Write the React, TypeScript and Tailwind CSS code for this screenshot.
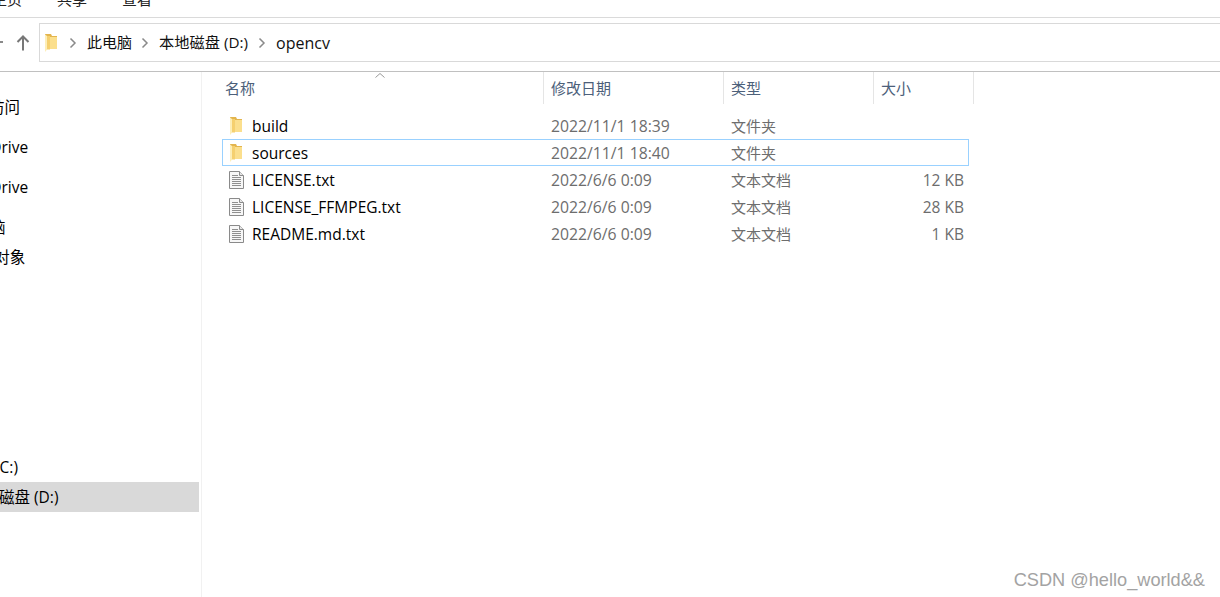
const uiFont = "font-['Open_Sans','Noto_Sans_CJK_SC',sans-serif]";

type FileRow = {
  name: string;
  date: string;
  kind: string;
  size?: string;
  folder?: boolean;
  selected?: boolean;
};

const files: FileRow[] = [
  { name: 'build', date: '2022/11/1 18:39', kind: '文件夹', folder: true },
  { name: 'sources', date: '2022/11/1 18:40', kind: '文件夹', folder: true, selected: true },
  { name: 'LICENSE.txt', date: '2022/6/6 0:09', kind: '文本文档', size: '12 KB' },
  { name: 'LICENSE_FFMPEG.txt', date: '2022/6/6 0:09', kind: '文本文档', size: '28 KB' },
  { name: 'README.md.txt', date: '2022/6/6 0:09', kind: '文本文档', size: '1 KB' },
];

function FolderIcon() {
  return (
    <svg width="14" height="18" viewBox="0 0 14 18" className="shrink-0">
      <path d="M1 0h6l1 2h5v13H3z" fill="#e3b54e" />
      <path d="M3 3h10v12H3z" fill="#fbdf8d" />
      <path d="M1 .5 3 2v13.500L1 18z" fill="#fdeeb8" />
      <path d="M3 2h3v13.500H3z" fill="#f5d06f" />
    </svg>
  );
}

function DocIcon() {
  return (
    <svg width="15" height="18" viewBox="0 0 15 18" className="shrink-0">
      <path d="M.5.500h10l4 4v13H.5z" fill="#f7f7f7" stroke="#8a8a8a" />
      <path d="M10.500.500v4h4" fill="#e6e6e6" stroke="#8a8a8a" />
      <path d="M3 4.500h6M3 6.500h9M3 8.500h9M3 10.500h9M3 12.500h9M3 14.500h9" stroke="#8f8f8f" />
    </svg>
  );
}

function Chevron() {
  return (
    <svg width="8" height="12" viewBox="0 0 8 12" className="shrink-0">
      <path d="M1.500 1.500 6 6l-4.500 4.500" fill="none" stroke="#8a8a8a" strokeWidth="1.500" />
    </svg>
  );
}

function NavItem({ label, offset, active, className }: { label: string; offset: string; active?: boolean; className: string }) {
  return (
    <div className={`flex items-center whitespace-nowrap text-[15.5px] text-black ${active ? 'bg-[#d9d9d9]' : ''} ${className}`}>
      <span className={`translate-y-px ${offset}`}>{label}</span>
    </div>
  );
}

export default function App() {
  return (
    <div className={`relative flex h-[597px] w-[1220px] flex-col overflow-hidden bg-white ${uiFont}`}>
      {/* Ribbon tabs, cut off by the top of the picture */}
      <div className="flex h-[17px] shrink-0 items-start gap-[35px] overflow-hidden text-[15px] leading-[20px] text-[#222]">
        <span className="-ml-[8px] -mt-[11px]">主页</span>
        <span className="-mt-[11px]">共享</span>
        <span className="-mt-[11px]">查看</span>
      </div>
      <div className="h-px shrink-0 bg-[#dadada]" />

      {/* Address bar */}
      <div className="mt-[5px] flex h-[39px] shrink-0 items-center">
        <div className="h-[2px] w-[3px] -translate-y-px bg-[#8a8a8a]" />
        <div className="ml-[9px] flex w-[22px] shrink-0 justify-center">
          <svg width="16" height="18" viewBox="0 0 16 18">
            <path d="M8 2.500v14M2.500 8 8 2.500 13.500 8" fill="none" stroke="#777" strokeWidth="2" />
          </svg>
        </div>
        <div className="ml-[5px] flex h-full flex-1 items-center border border-r-0 border-[#d9d9d9] pl-[4px] text-[15px] text-[#111]">
          <FolderIcon />
          <div className="ml-[11px] flex items-center">
            <Chevron />
            <span className="ml-[10px]">此电脑</span>
          </div>
          <div className="ml-[9px] flex items-center">
            <Chevron />
            <span className="ml-[10px] text-[15.250px]">本地磁盘 (D:)</span>
          </div>
          <div className="ml-[10px] flex items-center">
            <Chevron />
            <span className="ml-[10px] text-[16px]">opencv</span>
          </div>
        </div>
      </div>

      <div className="mt-[9px] h-px shrink-0 bg-[#c0c0c0]" />

      <div className="flex min-h-0 flex-1">
        {/* Navigation pane */}
        <aside className="w-[202px] shrink-0 overflow-hidden border-r border-[#f1f1f1] pr-[2px]">
          <NavItem label="快速访问" offset="-ml-[42px]" className="mt-[25px] h-[20px]" />
          <NavItem label="OneDrive" offset="-ml-[40px]" className="mt-[20px] h-[20px]" />
          <NavItem label="OneDrive" offset="-ml-[40px]" className="mt-[20px] h-[20px]" />
          <NavItem label="此电脑" offset="-ml-[41px]" className="mt-[20px] h-[20px]" />
          <NavItem label="3D 对象" offset="-ml-[30px]" className="mt-[10px] h-[20px]" />
          <NavItem label="本地磁盘 (C:)" offset="-ml-[71px]" className="mt-[190px] h-[20px]" />
          <NavItem label="本地磁盘 (D:)" offset="-ml-[32px]" active className="mt-[5px] h-[30px]" />
        </aside>

        {/* File list */}
        <main className="relative min-w-0 flex-1 pl-[20px]">
          <div className="flex h-[32px] w-[752px] text-[15px] text-[#4c607a]">
            <div className="relative flex w-[322px] items-center border-r border-[#e5e5e5] pl-[3px]">
              名称
              <svg width="10" height="5" viewBox="0 0 10 5" className="absolute left-[153px] top-[1px]">
                <path d="M.5 4.500 5 .5l4.500 4" fill="none" stroke="#999" />
              </svg>
            </div>
            <div className="flex w-[180px] items-center border-r border-[#e5e5e5] pl-[7px]">修改日期</div>
            <div className="flex w-[150px] items-center border-r border-[#e5e5e5] pl-[7px]">类型</div>
            <div className="flex w-[100px] items-center border-r border-[#e5e5e5] pl-[7px]">大小</div>
          </div>
          <div className="mt-[8px] w-[747px]">
            {files.map((file) => (
              <div
                key={file.name}
                className={`flex h-[27px] items-center border ${file.selected ? 'border-[#99d1ff]' : 'border-transparent'}`}
              >
                <div className="flex w-[321px] items-center pl-[6px]">
                  <div className="flex w-[23px]">{file.folder ? <FolderIcon /> : <DocIcon />}</div>
                  <span className="translate-y-px text-[15.500px] text-black">{file.name}</span>
                </div>
                <div className="w-[180px] translate-y-px pl-[7px] text-[15.750px] text-[#6d6d6d]">{file.date}</div>
                <div className="w-[160px] translate-y-px pl-[7px] text-[15px] text-[#6d6d6d]">{file.kind}</div>
                <div className="flex-1 translate-y-px pr-[4px] text-right text-[15.500px] text-[#6d6d6d]">{file.size}</div>
              </div>
            ))}
          </div>
        </main>
      </div>

      <div className="absolute bottom-[7px] right-[15px] font-['Liberation_Sans',sans-serif] text-[18.200px] leading-[20px] text-[#a3a3a3]">
        CSDN @hello_world&amp;&amp;
      </div>
    </div>
  );
}
